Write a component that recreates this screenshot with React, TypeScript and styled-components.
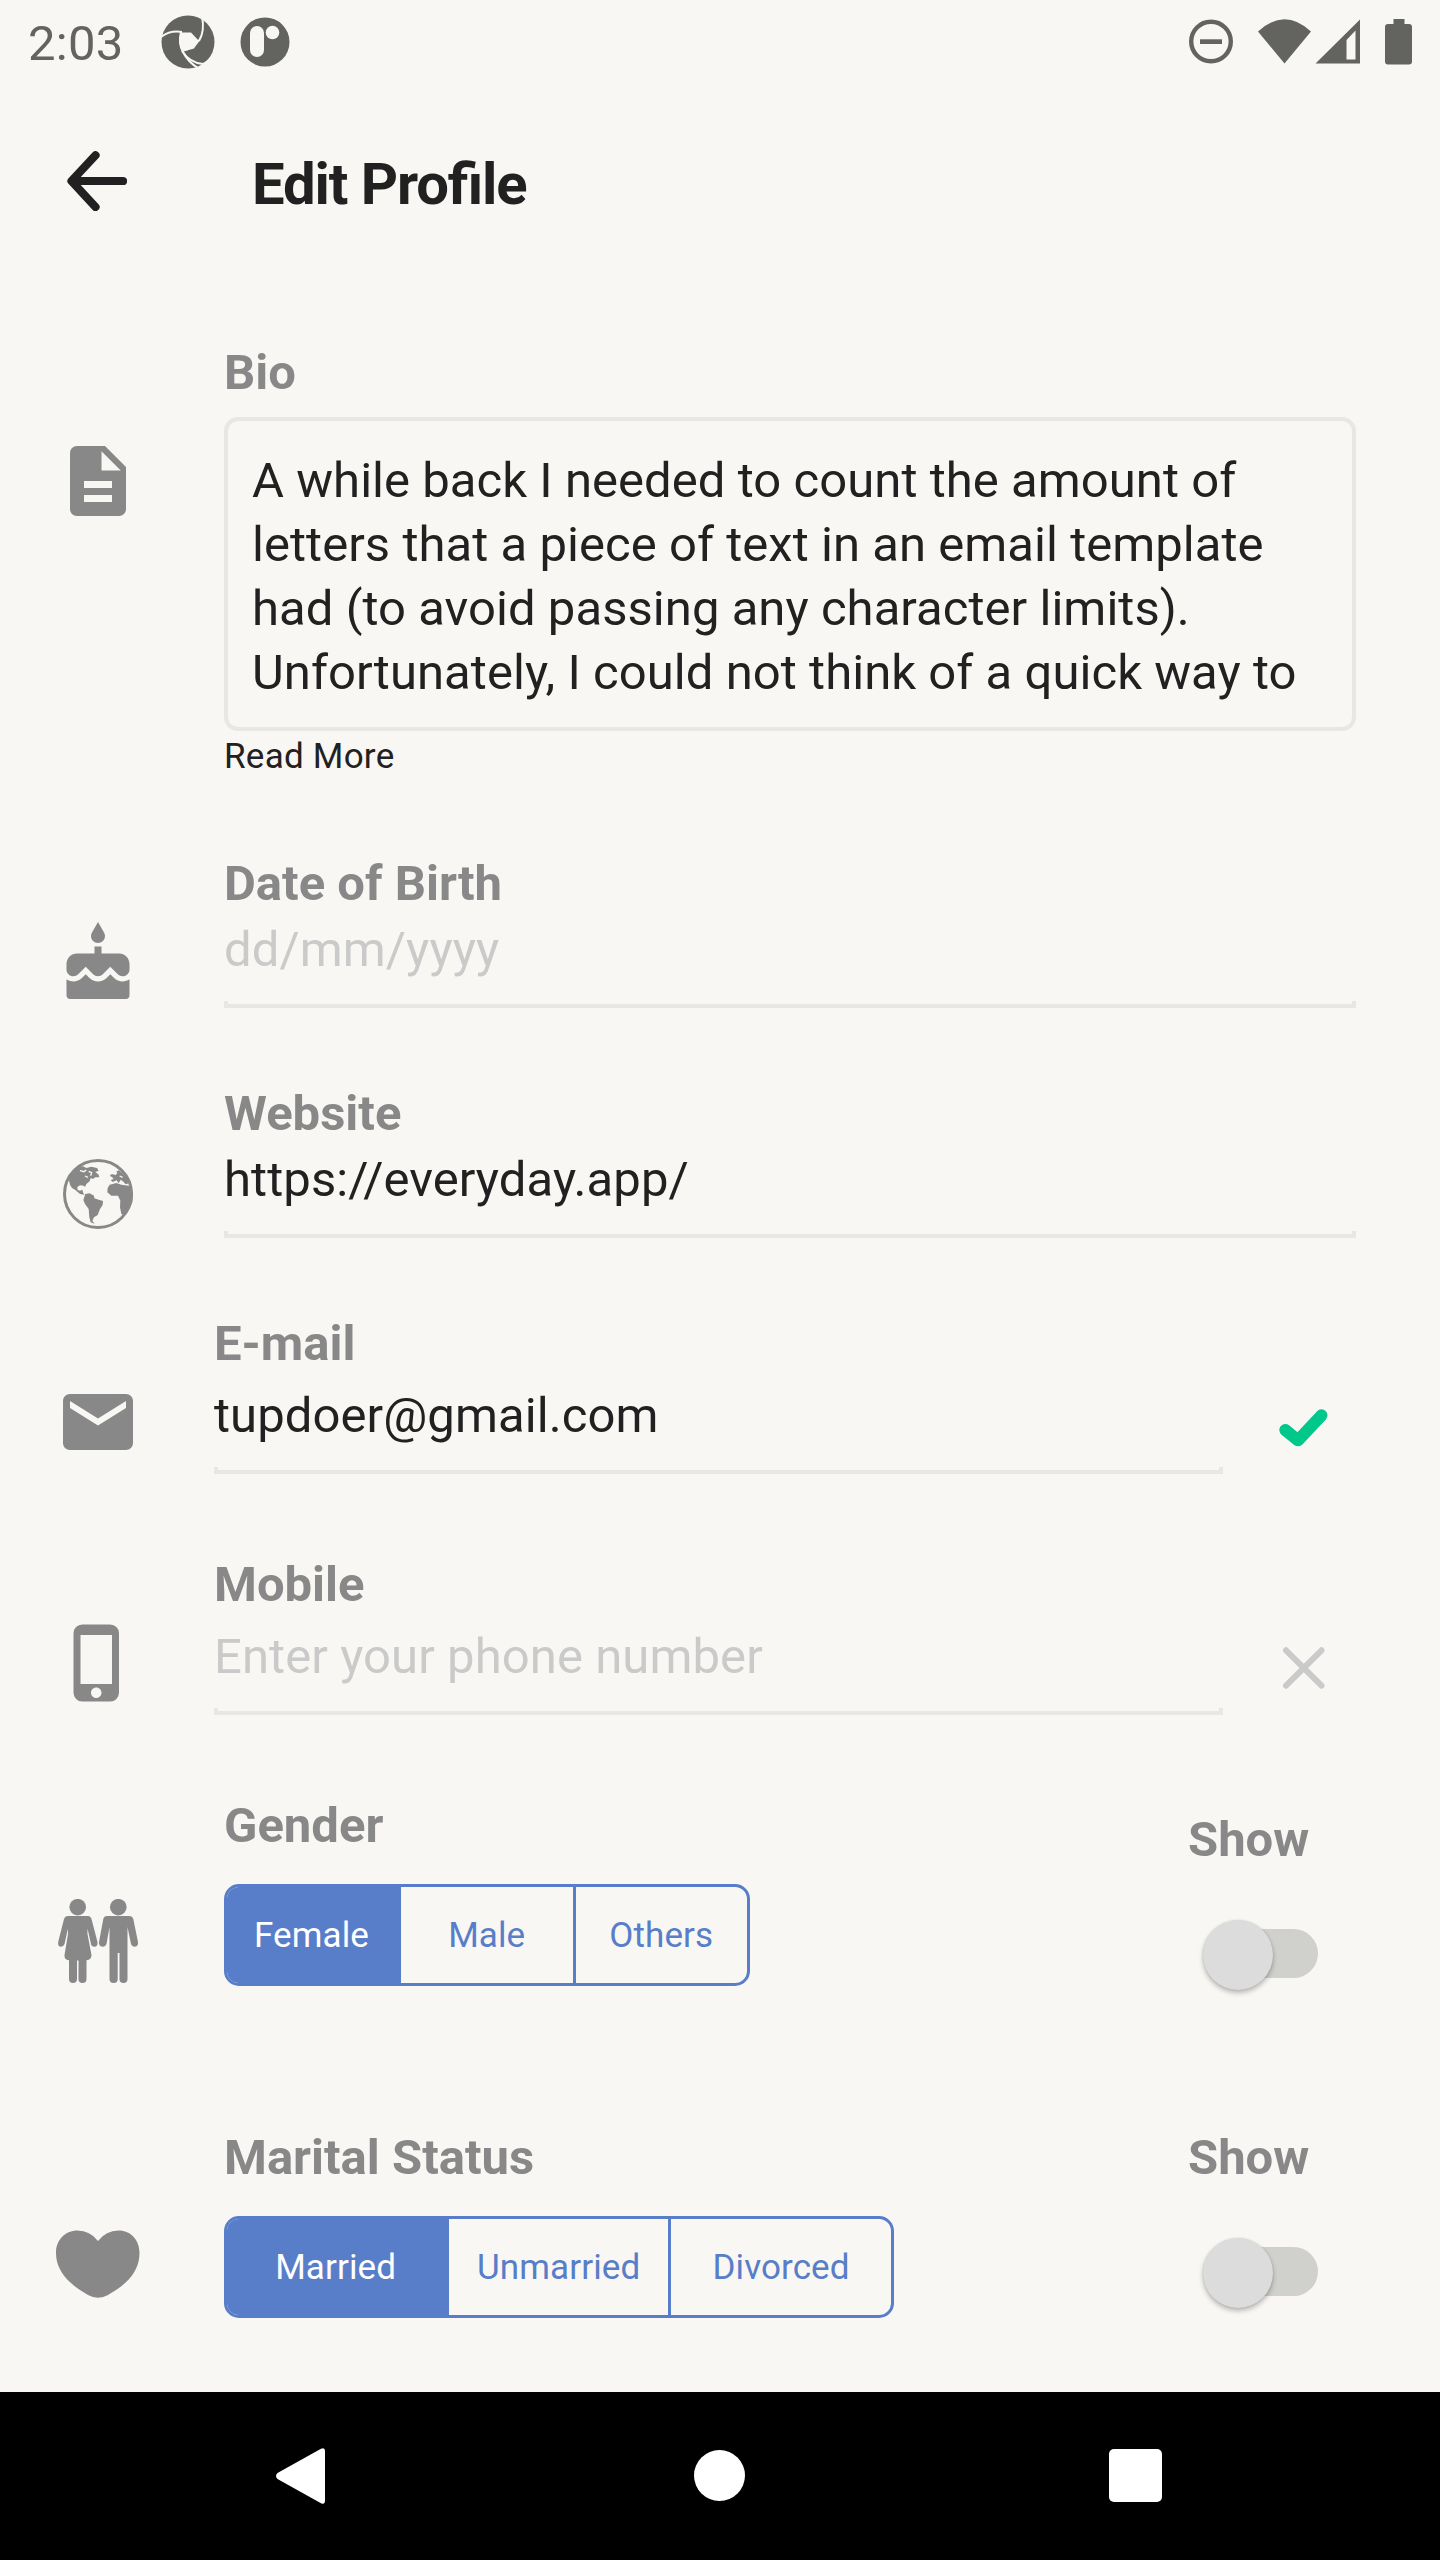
import React from "react";
import styled, { createGlobalStyle } from "styled-components";
import { MdDescription, MdEmail, MdPhoneIphone } from "react-icons/md";

const color = {
  page: "#f8f7f3",
  ink: "#212121",
  muted: "#888888",
  hint: "#cacaca",
  line: "#e7e8e3",
  status: "#636360",
  blue: "#587dc9",
  green: "#00c88a",
};

const GlobalStyle = createGlobalStyle`
  *, *::before, *::after { box-sizing: border-box; }
  body { margin: 0; background: ${color.page}; }
`;

const Screen = styled.div`
  width: 1440px;
  height: 2560px;
  display: flex;
  flex-direction: column;
  overflow: hidden;
  background: ${color.page};
  color: ${color.ink};
  font-family: Roboto, "Noto Sans", sans-serif;
  svg { display: block; flex: none; }
`;

const StatusBar = styled.div`
  height: 84px;
  display: flex;
  align-items: center;
  justify-content: space-between;
  padding: 0 27px 0 28px;
  color: ${color.status};
`;

const StatusGroup = styled.div`
  display: flex;
  align-items: center;
`;

const NotificationIcons = styled.div`
  display: flex;
  align-items: center;
  gap: 25px;
`;

const Clock = styled.span`
  width: 133px;
  font-size: 49px;
  line-height: 84px;
  letter-spacing: 0.3px;
  padding-top: 4px;
`;

const Header = styled.header`
  height: 256px;
  display: flex;
  padding: 67px 0 0 67px;
`;

const Title = styled.h1`
  margin: 0 0 0 125px;
  font-size: 58px;
  line-height: 66px;
  font-weight: 700;
  letter-spacing: -1.1px;
  font-feature-settings: "liga" 1;
`;

const Row = styled.section<{ $height: number }>`
  height: ${(p) => p.$height}px;
  flex: none;
  display: flex;
  padding-left: 56px;
`;

const IconCell = styled.div<{ $top: number; $inset?: boolean }>`
  width: ${(p) => (p.$inset ? 158 : 168)}px;
  flex: none;
  padding-top: ${(p) => p.$top}px;
  color: ${color.muted};
`;

const Field = styled.div<{ $width: number }>`
  width: ${(p) => p.$width}px;
  flex: none;
`;

const Label = styled.div`
  height: 64px;
  font-size: 49px;
  line-height: 66px;
  font-weight: 700;
  color: ${color.muted};
  white-space: nowrap;
`;

const BioBox = styled.div`
  height: 314px;
  margin-top: 13px;
  padding: 28px 24px 0;
  border: 4px solid ${color.line};
  border-radius: 14px;
  font-size: 49px;
  line-height: 64px;
  letter-spacing: 0.05px;
  white-space: pre;
`;

const ReadMore = styled.div`
  margin-top: 2px;
  font-size: 35px;
  line-height: 48px;
  letter-spacing: 0.25px;
`;

const Value = styled.div<{ $gap: number; $hint?: boolean }>`
  height: 64px;
  margin-top: ${(p) => p.$gap}px;
  font-size: 49px;
  line-height: 66px;
  letter-spacing: 0.08px;
  white-space: nowrap;
  color: ${(p) => (p.$hint ? color.hint : color.ink)};
`;

const Underline = styled.div`
  height: 7px;
  margin-top: 20px;
  border: solid ${color.line};
  border-width: 0 4px 4px;
`;

const StateCell = styled.div<{ $top: number }>`
  margin-left: 56px;
  padding-top: ${(p) => p.$top}px;
`;

const Segments = styled.div<{ $width: number }>`
  width: ${(p) => p.$width}px;
  height: 102px;
  margin-top: 27px;
  display: grid;
  grid-template-columns: 174fr 171.5fr 174.5fr;
  border: 3.5px solid ${color.blue};
  border-radius: 15px;
  overflow: hidden;
`;

const Segment = styled.button<{ $active?: boolean }>`
  min-width: 0;
  padding: 2px ${(p) => (p.$active ? 5 : 0)}px 0 0;
  border: 0;
  background: ${(p) => (p.$active ? color.blue : "transparent")};
  color: ${(p) => (p.$active ? "#ffffff" : color.blue)};
  font-family: inherit;
  font-size: 35px;
  line-height: 48px;
  letter-spacing: 0.1px;
  &:last-child { border-left: 3.5px solid ${color.blue}; }
`;

const ShowColumn = styled.div<{ $top: number }>`
  margin-left: auto;
  margin-right: 120px;
  width: 132px;
  padding-top: ${(p) => p.$top}px;
`;

const Track = styled.div`
  width: 112px;
  height: 49px;
  margin: 58px 0 0 18px;
  border-radius: 25px;
  background: #d0d1cc;
  display: flex;
  align-items: center;
`;

const Thumb = styled.div`
  width: 70px;
  height: 70px;
  flex: none;
  margin: 3px 0 0 -3.5px;
  border-radius: 50%;
  background: #dcdcdc;
  box-shadow: 0 3px 5px rgba(0, 0, 0, 0.26), 0 0 2px rgba(0, 0, 0, 0.12);
`;

const NavBar = styled.nav`
  height: 168px;
  flex: none;
  display: flex;
  align-items: center;
  justify-content: space-between;
  padding: 0 278.5px 0 275px;
  background: #000;
`;

const NavHome = styled.span`
  width: 51px;
  height: 51px;
  margin: 0 0 1px 4px;
  border-radius: 50%;
  background: #fff;
`;

const NavRecent = styled.span`
  width: 53px;
  height: 53px;
  margin-bottom: 1px;
  border-radius: 5px;
  background: #fff;
`;

function ShutterIcon() {
  return (
    <svg width="54" height="54" viewBox="0 0 54 54" fill="currentColor">
      <circle cx="27" cy="27" r="26.5" />
      <path fill={color.page} d="M20 17.5 30 17.5 38 26 33 33.5 22 36.5 18.5 28Z" />
      <g fill="none" stroke={color.page} strokeWidth="2">
        <path d="M0 22Q9 15 21 17" />
        <path d="M41 1.5Q44 16 38 26" />
        <path d="M54 38Q47 47 42 49Q29 48 21 36" />
        <path d="M38 25Q33 33 21 36" />
        <path d="M20 17Q17 28 22 37Q27 47 37 53" />
      </g>
    </svg>
  );
}

function RoundAppIcon() {
  return (
    <svg width="50" height="50" viewBox="0 0 50 50" fill="currentColor">
      <circle cx="25" cy="25" r="24.5" />
      <rect x="10" y="9" width="14" height="31" rx="7" fill={color.page} />
      <circle cx="32.5" cy="15.5" r="6.8" fill={color.page} />
    </svg>
  );
}

function SystemIcons() {
  return (
    <svg width="224" height="46" viewBox="0 0 224 46" fill="currentColor">
      <circle cx="22" cy="22.5" r="19.8" fill="none" stroke="currentColor" strokeWidth="4.4" />
      <rect x="11" y="20.3" width="22" height="4.7" />
      <path d="M69 12.5Q95.5-12 122 12.5L95.5 44.5Z" />
      <path fillRule="evenodd" d="M126.5 44.6 171 .5V44.6ZM157.5 21V40.5H166.5V11.5Z" />
      <path d="M204.5 0H215.5V5H220Q223 5 223 8V42.5Q223 45.5 220 45.5H199Q196 45.5 196 42.5V8Q196 5 199 5H204.5Z" />
    </svg>
  );
}

function BackArrow() {
  return (
    <svg width="60" height="60" viewBox="0 0 60 60" fill="none" stroke={color.ink} strokeWidth="8.2" strokeLinecap="round" strokeLinejoin="round">
      <path d="M28.5 4.3 4.5 30 28.5 56M5 30H56" />
    </svg>
  );
}

function CakeIcon() {
  return (
    <svg width="84" height="84" viewBox="0 0 24 24" fill="currentColor">
      <path d="M12 6C13.11 6 14 5.1 14 4C14 3.62 13.9 3.27 13.71 2.97L12 0L10.29 2.97C10.1 3.27 10 3.62 10 4C10 5.1 10.9 6 12 6M16.6 16L15.53 14.92L14.45 16C13.15 17.29 10.87 17.3 9.56 16L8.5 14.92L7.4 16C6.75 16.64 5.88 17 4.96 17C4.23 17 3.56 16.77 3 16.39V21C3 21.55 3.45 22 4 22H20C20.55 22 21 21.55 21 21V16.39C20.44 16.77 19.77 17 19.04 17C18.12 17 17.25 16.64 16.6 16M18 9H13V7H11V9H6C4.34 9 3 10.34 3 12V13.54C3 14.62 3.88 15.5 4.96 15.5C5.5 15.5 6 15.3 6.34 14.93L8.5 12.8L10.61 14.93C11.35 15.67 12.64 15.67 13.38 14.93L15.5 12.8L17.65 14.93C18 15.3 18.5 15.5 19.03 15.5C20.11 15.5 21 14.62 21 13.54V12C21 10.34 19.66 9 18 9Z" />
    </svg>
  );
}

function GlobeIcon() {
  return (
    <svg width="84" height="84" viewBox="-6 -6 252 252" fill="currentColor">
      <circle cx="120" cy="120" r="100.5" fill="none" stroke="currentColor" strokeWidth="9" />
      <path d="M35 65 50 50 62 39 75 37 85 42 100 38 117 42 122 50 112 54 122 62 124 70 112 70 105 75 98 72 95 82 85 90 81 99 77 95 66 94 58 99 59 108 66 110 73 107 76 118 80 122 66 120 52 108 42 102 36 92 33 80Z" />
      <path d="M82 120 95 118 108 125 109 133 122 137 135 141 134 153 126 165 119 183 108 190 103 200 110 209 98 205 94 190 92 165 81 150 76 138Z" />
      <path d="M155 92 175 87 190 92 212 95 222 105 225 120 223 145 213 167 199 183 190 180 186 160 187 140 180 125 160 125 148 115 149 102Z" />
      <path d="M158 78 167 75 162 69 155 66 161 60 173 63 178 57 175 52 183 49 193 57 206 72 213 88 203 91 196 83 188 77 182 88 176 79 164 84Z" />
      <path d="M66 50 78 53 85 48M92 52 101 56 98 65M81 66 90 70" fill="none" stroke={color.page} strokeWidth="4" />
      <path d="M185 66 194 70M189 83 193 88" fill="none" stroke={color.page} strokeWidth="4" />
    </svg>
  );
}

function CoupleIcon() {
  return (
    <svg width="84" height="84" viewBox="0 0 84 84" fill="currentColor">
      <circle cx="21.7" cy="8.2" r="8.3" />
      <circle cx="62.3" cy="8.2" r="8.3" />
      <path d="M12 17H32Q34.5 17 35.5 20L41.5 43Q42 47 39 47.7Q35.5 48 35 45L31.5 29.5V35L35.5 56Q35.5 61 30.5 61.3V80Q30.5 84 26.5 84Q22.5 84 22.5 80V61.5H21V80Q21 84 17 84Q13 84 13 80V61.3Q8 61 8.5 56L12 35V29.5L8.5 45Q7.5 48 4.5 47.7Q1.5 47 2.2 43L8 20Q9 17 12 17Z" />
      <path d="M51 17H73Q76.5 17 77.3 20L82 43Q82.5 47 79 47.7Q76 48 75 45L71.5 28V80Q71.5 84 67.5 84Q63.5 84 63.5 80V54H61.7V80Q61.7 84 57.7 84Q53.5 84 53.5 80V28L50.5 45Q49.5 48 46.5 47.7Q42.5 47 43 43L47.3 20Q48 17 51 17Z" />
    </svg>
  );
}

function HeartIcon() {
  return (
    <svg width="84" height="84" viewBox="0 0 84 84" fill="currentColor">
      <path d="M42 19Q34 8.5 21.5 8.5C9 8.5 0 18 0 31C0 43 6 53 15 61C21 66.5 27 70 32 73Q42 78.5 52 73C57 70 63 66.5 69 61C78 53 83.5 43 83.5 31C83.5 18 75 8.5 62.5 8.5Q50 8.5 42 19Z" />
    </svg>
  );
}

function CheckIcon() {
  return (
    <svg width="49" height="38" viewBox="0 0 49 38" fill="none" stroke={color.green} strokeWidth="12" strokeLinecap="round" strokeLinejoin="round">
      <path d="M6.3 21 19 31.3 42.5 6.3" />
    </svg>
  );
}

function CrossIcon() {
  return (
    <svg width="49" height="42" viewBox="0 0 49 42" fill="none" stroke={color.hint} strokeWidth="6" strokeLinecap="round">
      <path d="M7 3.3 42.5 38.7M42.5 3.3 7 38.7" />
    </svg>
  );
}

function NavBack() {
  return (
    <svg width="51" height="58" viewBox="0 0 51 58" fill="#fff">
      <path d="M2.5 26 46 1.8Q50 0 50 4V54Q50 58 46 56.2L2.5 32Q-.5 29 2.5 26Z" />
    </svg>
  );
}

function TextRow(props: {
  icon: React.ReactNode;
  iconTop: number;
  label: string;
  value: string;
  hint?: boolean;
  state?: React.ReactNode;
  stateTop?: number;
}) {
  const compact = props.state !== undefined;
  return (
    <Row $height={compact ? 241 : 230}>
      <IconCell $top={props.iconTop} $inset={compact}>{props.icon}</IconCell>
      <Field $width={compact ? 1009 : 1132}>
        <Label>{props.label}</Label>
        <Value $gap={compact ? 8 : 2} $hint={props.hint}>{props.value}</Value>
        <Underline />
      </Field>
      {compact && <StateCell $top={props.stateTop ?? 0}>{props.state}</StateCell>}
    </Row>
  );
}

function ChoiceRow(props: {
  icon: React.ReactNode;
  iconTop: number;
  label: string;
  options: string[];
  width: number;
  height: number;
  showTop: number;
}) {
  return (
    <Row $height={props.height}>
      <IconCell $top={props.iconTop}>{props.icon}</IconCell>
      <Field $width={props.width}>
        <Label>{props.label}</Label>
        <Segments $width={props.width}>
          {props.options.map((option, index) => (
            <Segment key={option} $active={index === 0}>{option}</Segment>
          ))}
        </Segments>
      </Field>
      <ShowColumn $top={props.showTop}>
        <Label>Show</Label>
        <Track><Thumb /></Track>
      </ShowColumn>
    </Row>
  );
}

const bio = [
  "A while back I needed to count the amount of",
  "letters that a piece of text in an email template",
  "had (to avoid passing any character limits).",
  "Unfortunately, I could not think of a quick way to",
].join("\n");

export default function App() {
  return (
    <Screen>
      <GlobalStyle />
      <StatusBar>
        <StatusGroup>
          <Clock>2:03</Clock>
          <NotificationIcons>
            <ShutterIcon />
            <RoundAppIcon />
          </NotificationIcons>
        </StatusGroup>
        <StatusGroup><SystemIcons /></StatusGroup>
      </StatusBar>
      <Header>
        <BackArrow />
        <Title>Edit Profile</Title>
      </Header>
      <Row $height={511}>
        <IconCell $top={99}><MdDescription size={84} /></IconCell>
        <Field $width={1132}>
          <Label>Bio</Label>
          <BioBox>{bio}</BioBox>
          <ReadMore>Read More</ReadMore>
        </Field>
      </Row>
      <TextRow icon={<CakeIcon />} iconTop={71} label="Date of Birth" value="dd/mm/yyyy" hint />
      <TextRow icon={<GlobeIcon />} iconTop={71} label="Website" value="https://everyday.app/" />
      <TextRow icon={<MdEmail size={84} />} iconTop={69} label="E-mail" value="tupdoer@gmail.com" state={<CheckIcon />} stateTop={98} />
      <TextRow icon={<MdPhoneIphone size={84} />} iconTop={69} label="Mobile" value="Enter your phone number" hint state={<CrossIcon />} stateTop={95} />
      <ChoiceRow icon={<CoupleIcon />} iconTop={106} label="Gender" options={["Female", "Male", "Others"]} width={526} height={332} showTop={14} />
      <ChoiceRow icon={<HeartIcon />} iconTop={97} label="Marital Status" options={["Married", "Unmarried", "Divorced"]} width={670} height={267} showTop={0} />
      <NavBar>
        <NavBack />
        <NavHome />
        <NavRecent />
      </NavBar>
    </Screen>
  );
}
